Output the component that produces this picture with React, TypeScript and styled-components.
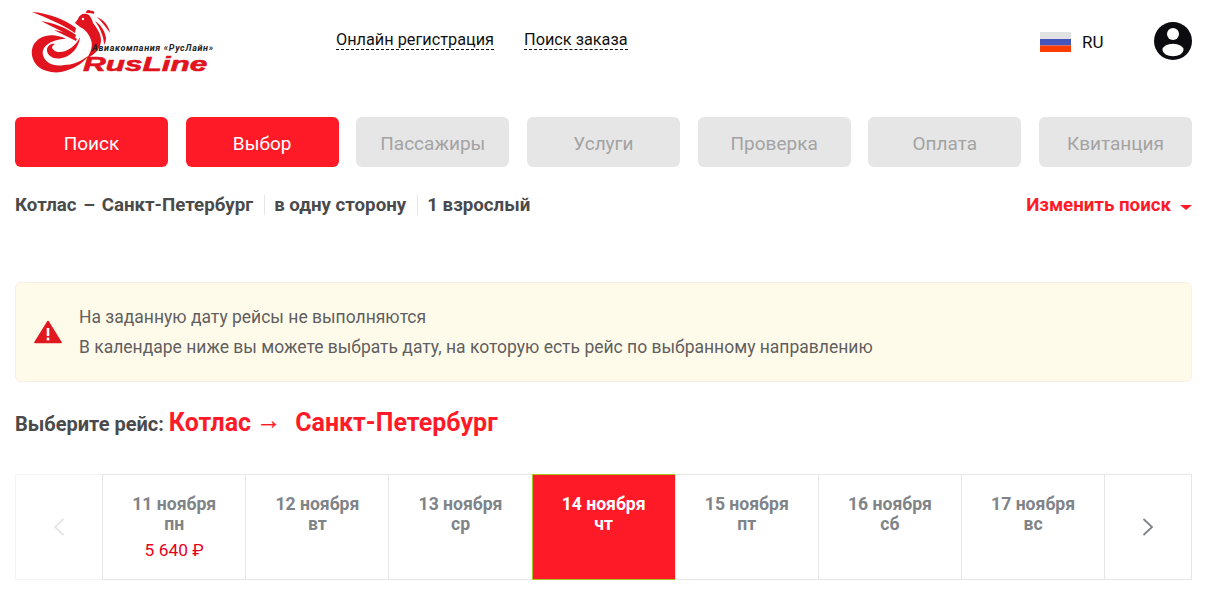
import React from 'react';
import styled, { createGlobalStyle } from 'styled-components';

const days = [
    { date: '11 ноября', week: 'пн', price: '5 640 ₽' },
    { date: '12 ноября', week: 'вт' },
    { date: '13 ноября', week: 'ср' },
    { date: '14 ноября', week: 'чт', active: true },
    { date: '15 ноября', week: 'пт' },
    { date: '16 ноября', week: 'сб' },
    { date: '17 ноября', week: 'вс' },
];

const steps = [
    { title: 'Поиск', done: true },
    { title: 'Выбор', done: true },
    { title: 'Пассажиры' },
    { title: 'Услуги' },
    { title: 'Проверка' },
    { title: 'Оплата' },
    { title: 'Квитанция' },
];

const Logo = () => (
    <LogoBox>
        <svg width="220" height="90" viewBox="15 0 220 90">
            {/* wing */}
            <path d="M32 12 C48 13 64 19 76 28 L75 33 C62 24 47 18 32 12 Z" fill="#e0131f" />
            <path d="M41 21 C54 23 67 28 76 35 L75 38 C64 32 52 27 41 21 Z" fill="#e0131f" />
            <path d="M54 30 C62 31 71 34 77 39 L76 41 C69 37 61 34 54 30 Z" fill="#e0131f" />
            {/* head and neck */}
            <path d="M75 23 L78 19 C79 15 83 13 87 14 C90 15 92 19 93 23 C97 28 101 34 101 40 C101 48 95 55 87 58 C91 52 93 46 91 40 C89 34 85 29 80 27 C78 25 76 24 75 23 Z" fill="#e0131f" />
            <path d="M86 13 C86 10 89 9 91 11 C93 10 95 12 94 14 C92 13 89 13 86 13 Z" fill="#e0131f" />
            <path d="M95 21 C101 25 105 31 106 38 C106 41 105 43 104 45 C104 37 100 28 95 21 Z" fill="#e0131f" />
            <path d="M97 17 C104 20 109 26 110 33 C106 27 102 22 97 17 Z" fill="#e0131f" />
            <circle cx="83" cy="19" r="1.2" fill="#fff" />
            {/* swirl */}
            <path d="M66 39 C53 32 38 35 33 46 C29 56 35 68 47 71 C53 73 61 73 68 70 C77 67 84 62 88 56 C80 62 72 65 64 65 C54 67 45 63 43 55 C41 46 52 39 66 39 Z" fill="#e0131f" />
            <path d="M80 37 C76 46 66 53 58 52 C52 51 50 46 55 44 C51 43 47 46 47 50 C47 56 54 60 62 58 C72 56 79 47 80 37 Z" fill="#e0131f" />
        </svg>
        <LogoCaption>Авиакомпания «РусЛайн»</LogoCaption>
        <LogoName>RusLine</LogoName>
    </LogoBox>
);

const FlagIcon = () => (
    <svg width="31" height="20" viewBox="0 0 31 20">
        <rect width="31" height="7" fill="#e1e2e4" />
        <rect y="7" width="31" height="6.5" fill="#4655bb" />
        <rect y="13.5" width="31" height="6.5" fill="#ff3d00" />
    </svg>
);

const UserIcon = () => (
    <UserButton>
        <svg width="38" height="38" viewBox="0 0 38 38">
            <circle cx="19" cy="19" r="19" fill="#0b0b10" />
            <circle cx="19" cy="12" r="6" fill="#fff" />
            <ellipse cx="19" cy="28" rx="10.5" ry="6.2" fill="#fff" />
        </svg>
    </UserButton>
);

const WarningIcon = () => (
    <svg width="28" height="24" viewBox="0 0 28 24">
        <path d="M14 1.5 L27 22.5 L1 22.5 Z" fill="#e0181f" stroke="#e0181f" strokeWidth="1.6" strokeLinejoin="round" />
        <rect x="12.7" y="8" width="2.6" height="8" fill="#fff" />
        <rect x="12.7" y="17.6" width="2.6" height="2.8" fill="#fff" />
    </svg>
);

const Chevron = ({ left, color }: { left?: boolean; color: string }) => (
    <svg width="12" height="20" viewBox="0 0 12 20">
        <path d={left ? 'M10.5 2 L2 10 L10.5 18' : 'M1.5 2 L10 10 L1.5 18'} fill="none" stroke={color} strokeWidth="1.8" />
    </svg>
);

export default function App() {
    return (
        <Page>
            <GlobalStyle />
            <Header>
                <Logo />
                <TopNav>
                    <TopLink>Онлайн регистрация</TopLink>
                    <TopLink>Поиск заказа</TopLink>
                </TopNav>
                <Lang>
                    <FlagIcon />
                    <span>RU</span>
                </Lang>
                <UserIcon />
            </Header>

            <Steps>
                {steps.map((step) => (
                    <Step key={step.title} $done={step.done}>{step.title}</Step>
                ))}
            </Steps>

            <SummaryRow>
                <Route>
                    <RouteItem>Котлас – Санкт-Петербург</RouteItem>
                    <RouteItem>в одну сторону</RouteItem>
                    <RouteItem>1 взрослый</RouteItem>
                </Route>
                <ChangeSearch>
                    Изменить поиск
                    <Caret />
                </ChangeSearch>
            </SummaryRow>

            <Alert>
                <WarningIcon />
                <AlertText>
                    <div>На заданную дату рейсы не выполняются</div>
                    <div>В календаре ниже вы можете выбрать дату, на которую есть рейс по выбранному направлению</div>
                </AlertText>
            </Alert>

            <Heading>
                <HeadingLabel>Выберите рейс:</HeadingLabel>
                <HeadingRoute>Котлас</HeadingRoute>
                <HeadingArrow>→</HeadingArrow>
                <HeadingRoute>Санкт-Петербург</HeadingRoute>
            </Heading>

            <Calendar>
                <ArrowCell $faded>
                    <Chevron left color="#e6e6e6" />
                </ArrowCell>
                {days.map((day) => (
                    <DayCell key={day.date} $active={day.active}>
                        <DayName>{day.date}</DayName>
                        <DayName>{day.week}</DayName>
                        {day.price && <DayPrice>{day.price}</DayPrice>}
                    </DayCell>
                ))}
                <ArrowCell>
                    <Chevron color="#7f8488" />
                </ArrowCell>
            </Calendar>
        </Page>
    );
}

const GlobalStyle = createGlobalStyle`
    html, body {
        margin: 0;
        padding: 0;
        background: #fff;
        overflow: hidden;
    }
    * {
        box-sizing: border-box;
    }
`;

const Page = styled.div`
    width: 1207px;
    height: 614px;
    padding: 0 15px;
    font-family: Roboto, "Liberation Sans", sans-serif;
    color: #4a4a4a;
`;

const Header = styled.header`
    display: flex;
    align-items: flex-start;
    height: 117px;
`;

const LogoBox = styled.div`
    position: relative;
    width: 321px;
    height: 90px;
    flex-shrink: 0;
    svg {
        display: block;
    }
`;

const LogoCaption = styled.span`
    position: absolute;
    left: 77px;
    top: 43px;
    font-size: 9px;
    line-height: 11px;
    font-weight: 700;
    font-style: italic;
    letter-spacing: 0.65px;
    color: #222;
    white-space: nowrap;
`;

const LogoName = styled.span`
    position: absolute;
    left: 68px;
    top: 54px;
    font-family: "Liberation Sans", sans-serif;
    font-size: 21px;
    line-height: 20px;
    font-weight: 700;
    font-style: italic;
    color: #e0131f;
    -webkit-text-stroke: 0.6px #e0131f;
    transform: scaleX(1.5);
    transform-origin: left center;
    white-space: nowrap;
`;

const TopNav = styled.nav`
    display: flex;
    gap: 30px;
    padding-top: 30px;
    width: 704px;
`;

const TopLink = styled.a`
    font-size: 16.3px;
    line-height: 19px;
    color: #111;
    border-bottom: 1px dashed #111;
    white-space: nowrap;
`;

const Lang = styled.div`
    display: flex;
    align-items: center;
    gap: 11px;
    width: 114px;
    padding-top: 32px;
    font-size: 17px;
    color: #111;
    span {
        line-height: 20px;
    }
`;

const UserButton = styled.div`
    margin-top: 22px;
    height: 38px;
    svg {
        display: block;
    }
`;

const Steps = styled.div`
    display: flex;
    justify-content: space-between;
`;

const Step = styled.div<{ $done?: boolean }>`
    width: 153px;
    height: 50px;
    display: flex;
    align-items: center;
    justify-content: center;
    padding-top: 2px;
    border-radius: 6px;
    font-size: 19px;
    background: ${(props) => (props.$done ? '#ff1a28' : '#e6e6e6')};
    color: ${(props) => (props.$done ? '#fff' : '#a3a3a3')};
`;

const SummaryRow = styled.div`
    display: flex;
    align-items: center;
    justify-content: space-between;
    height: 20px;
    margin-top: 28px;
`;

const Route = styled.div`
    display: flex;
    align-items: center;
`;

const RouteItem = styled.div`
    font-size: 18.72px;
    line-height: 20px;
    font-weight: 700;
    color: #4a4a4a;
    padding: 0 11px 0 9px;
    border-left: 1px solid #e6e6e6;
    white-space: nowrap;
    &:first-child {
        padding-left: 0;
        border-left: 0;
        word-spacing: 2px;
    }
`;

const ChangeSearch = styled.div`
    display: flex;
    align-items: center;
    font-size: 18.72px;
    line-height: 20px;
    font-weight: 700;
    color: #ff1a28;
`;

const Caret = styled.span`
    width: 0;
    height: 0;
    margin: 5px 0 0 9px;
    border-left: 6.5px solid transparent;
    border-right: 6.5px solid transparent;
    border-top: 5px solid #ff1a28;
`;

const Alert = styled.div`
    display: flex;
    align-items: center;
    gap: 17px;
    height: 100px;
    margin-top: 67px;
    padding: 0 18px;
    background: #fffbea;
    border: 1px solid #fdeee4;
    border-radius: 6px;
`;

const AlertText = styled.div`
    font-size: 17.5px;
    line-height: 30px;
    color: #5f5f5f;
`;

const Heading = styled.div`
    display: flex;
    align-items: baseline;
    margin-top: 26px;
    height: 32px;
`;

const HeadingLabel = styled.span`
    font-size: 20px;
    font-weight: 700;
    color: #4a4a4a;
    margin-right: 5px;
`;

const HeadingRoute = styled.span`
    font-size: 25px;
    font-weight: 700;
    color: #ff1a28;
`;

const HeadingArrow = styled.span`
    font-size: 25px;
    font-weight: 700;
    color: #ff1a28;
    -webkit-text-stroke: 0.4px #ff1a28;
    margin: 0 14px 0 5px;
    transform: translateY(-2px);
`;

const Calendar = styled.div`
    display: grid;
    grid-template-columns: 87.17px repeat(7, 143.15px) 1fr;
    height: 106px;
    margin-top: 34px;
`;

const ArrowCell = styled.div<{ $faded?: boolean }>`
    display: flex;
    align-items: center;
    justify-content: center;
    border: 1px solid ${(props) => (props.$faded ? '#f4f4f4' : '#e6e6e6')};
    ${(props) => (props.$faded ? 'border-right: 0;' : '')}
`;

const DayCell = styled.div<{ $active?: boolean }>`
    display: flex;
    flex-direction: column;
    align-items: center;
    padding-top: 19px;
    border: 1px solid ${(props) => (props.$active ? '#a9c420' : '#e6e6e6')};
    border-right: 0;
    background: ${(props) => (props.$active ? '#ff1a28' : '#fff')};
    color: ${(props) => (props.$active ? '#fff' : '#7f8488')};
`;

const DayName = styled.div`
    font-size: 17.6px;
    line-height: 20px;
    font-weight: 700;
`;

const DayPrice = styled.div`
    margin-top: 6px;
    font-size: 17.4px;
    line-height: 20px;
    color: #e8001c;
`;
